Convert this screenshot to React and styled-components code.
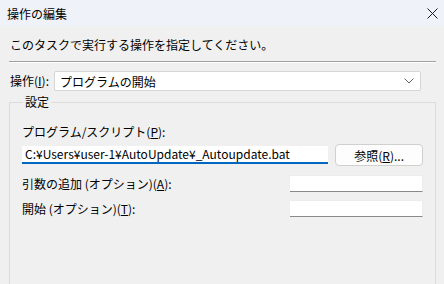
import React from "react"
import styled, { createGlobalStyle } from "styled-components"

const Global = createGlobalStyle`
  html, body {
    margin: 0;
    padding: 0;
    background: #f0f0f0;
  }
  body {
    width: 444px;
    height: 284px;
    overflow: hidden;
    font-family: "Noto Sans CJK JP", "Noto Sans", sans-serif;
    font-size: 12px;
    color: #000;
  }
`

const Window = styled.div`
  width: 444px;
  height: 284px;
  display: flex;
  flex-direction: column;
  background: #f0f0f0;
`

const TitleBar = styled.div`
  height: 26px;
  flex: none;
  display: flex;
  align-items: center;
  justify-content: space-between;
  padding: 0 6px 0 7px;
  background: #eff3f9;
  font-size: 12px;
`

const Body = styled.div`
  flex: 1;
  display: flex;
  flex-direction: column;
  padding: 10px 8px 0 9px;
`

const Instruction = styled.div`
  height: 18px;
  line-height: 18px;
  padding-left: 1px;
`

const Separator = styled.div`
  margin: 7px 0 0 0;
  width: 427px;
  border-top: 1px solid #a0a0a0;
  border-bottom: 1px solid #ffffff;
`

const Row = styled.div`
  display: flex;
  align-items: center;
  gap: ${(p) => p.$gap || 0}px;
`

const ActionRow = styled(Row)`
  margin-top: 8px;
  padding-left: 1px;
`

const Label = styled.span`
  white-space: nowrap;
  line-height: 16px;
`

const Key = styled.span`
  text-decoration: underline;
`

const Combo = styled.div`
  margin-left: 5px;
  width: 367px;
  height: 20px;
  box-sizing: border-box;
  background: #fff;
  border: 1px solid #d6d6d6;
  border-radius: 2px;
  display: flex;
  align-items: center;
  justify-content: space-between;
  padding: 0 6px 0 5px;
`

const Group = styled.fieldset`
  margin: 4px 0 0 0;
  width: 427px;
  box-sizing: border-box;
  flex: 1;
  border: 1px solid #dcdcdc;
  border-bottom: none;
  padding: 15px 12px 0 12px;
  min-width: 0;
`

const Legend = styled.legend`
  padding: 0 2px;
  margin-left: 1px;
  line-height: 14px;
`

const FieldLabel = styled.div`
  line-height: 16px;
  margin-bottom: 4px;
`

const PathInput = styled.div`
  width: 307px;
  height: 18px;
  box-sizing: border-box;
  background: #fff;
  border-bottom: 2px solid #0067c0;
  padding-left: 3px;
  line-height: 16px;
  white-space: nowrap;
  overflow: hidden;
`

const Button = styled.div`
  width: 88px;
  height: 22px;
  box-sizing: border-box;
  border: 1px solid #d0d0d0;
  border-radius: 4px;
  background: #fdfdfd;
  display: flex;
  align-items: center;
  justify-content: center;
`

const OptionRow = styled.div`
  display: flex;
  align-items: center;
  justify-content: space-between;
  margin-top: ${(p) => p.$top}px;
`

const SmallInput = styled.div`
  width: 133px;
  height: 17px;
  box-sizing: border-box;
  background: #fff;
  border-top: 1px solid #ececec;
  border-right: 1px solid #ececec;
  border-bottom: 1px solid #8a8a8a;
`

function Chevron() {
  return (
    <svg width="10" height="6" viewBox="0 0 10 6">
      <path d="M0.5 0.5 L5 5 L9.5 0.5" fill="none" stroke="#606060" strokeWidth="1" />
    </svg>
  )
}

function Close() {
  return (
    <svg width="11" height="11" viewBox="0 0 11 11">
      <path d="M0.5 0.5 L10.5 10.5 M10.5 0.5 L0.5 10.5" stroke="#1a1a1a" strokeWidth="1" />
    </svg>
  )
}

export default function App() {
  return (
    <Window>
      <Global />
      <TitleBar>
        <span>操作の編集</span>
        <Close />
      </TitleBar>
      <Body>
        <Instruction>このタスクで実行する操作を指定してください。</Instruction>
        <Separator />
        <ActionRow>
          <Label>
            操作(<Key>I</Key>):
          </Label>
          <Combo>
            <span>プログラムの開始</span>
            <Chevron />
          </Combo>
        </ActionRow>
        <Group>
          <Legend>設定</Legend>
          <FieldLabel>
            プログラム/スクリプト(<Key>P</Key>):
          </FieldLabel>
          <Row $gap={7}>
            <PathInput>C:¥Users¥user-1¥AutoUpdate¥_Autoupdate.bat</PathInput>
            <Button>
              参照(<Key>R</Key>)...
            </Button>
          </Row>
          <OptionRow $top={9}>
            <Label>
              引数の追加 (オプション)(<Key>A</Key>):
            </Label>
            <SmallInput />
          </OptionRow>
          <OptionRow $top={8}>
            <Label>
              開始 (オプション)(<Key>T</Key>):
            </Label>
            <SmallInput />
          </OptionRow>
        </Group>
      </Body>
    </Window>
  )
}
